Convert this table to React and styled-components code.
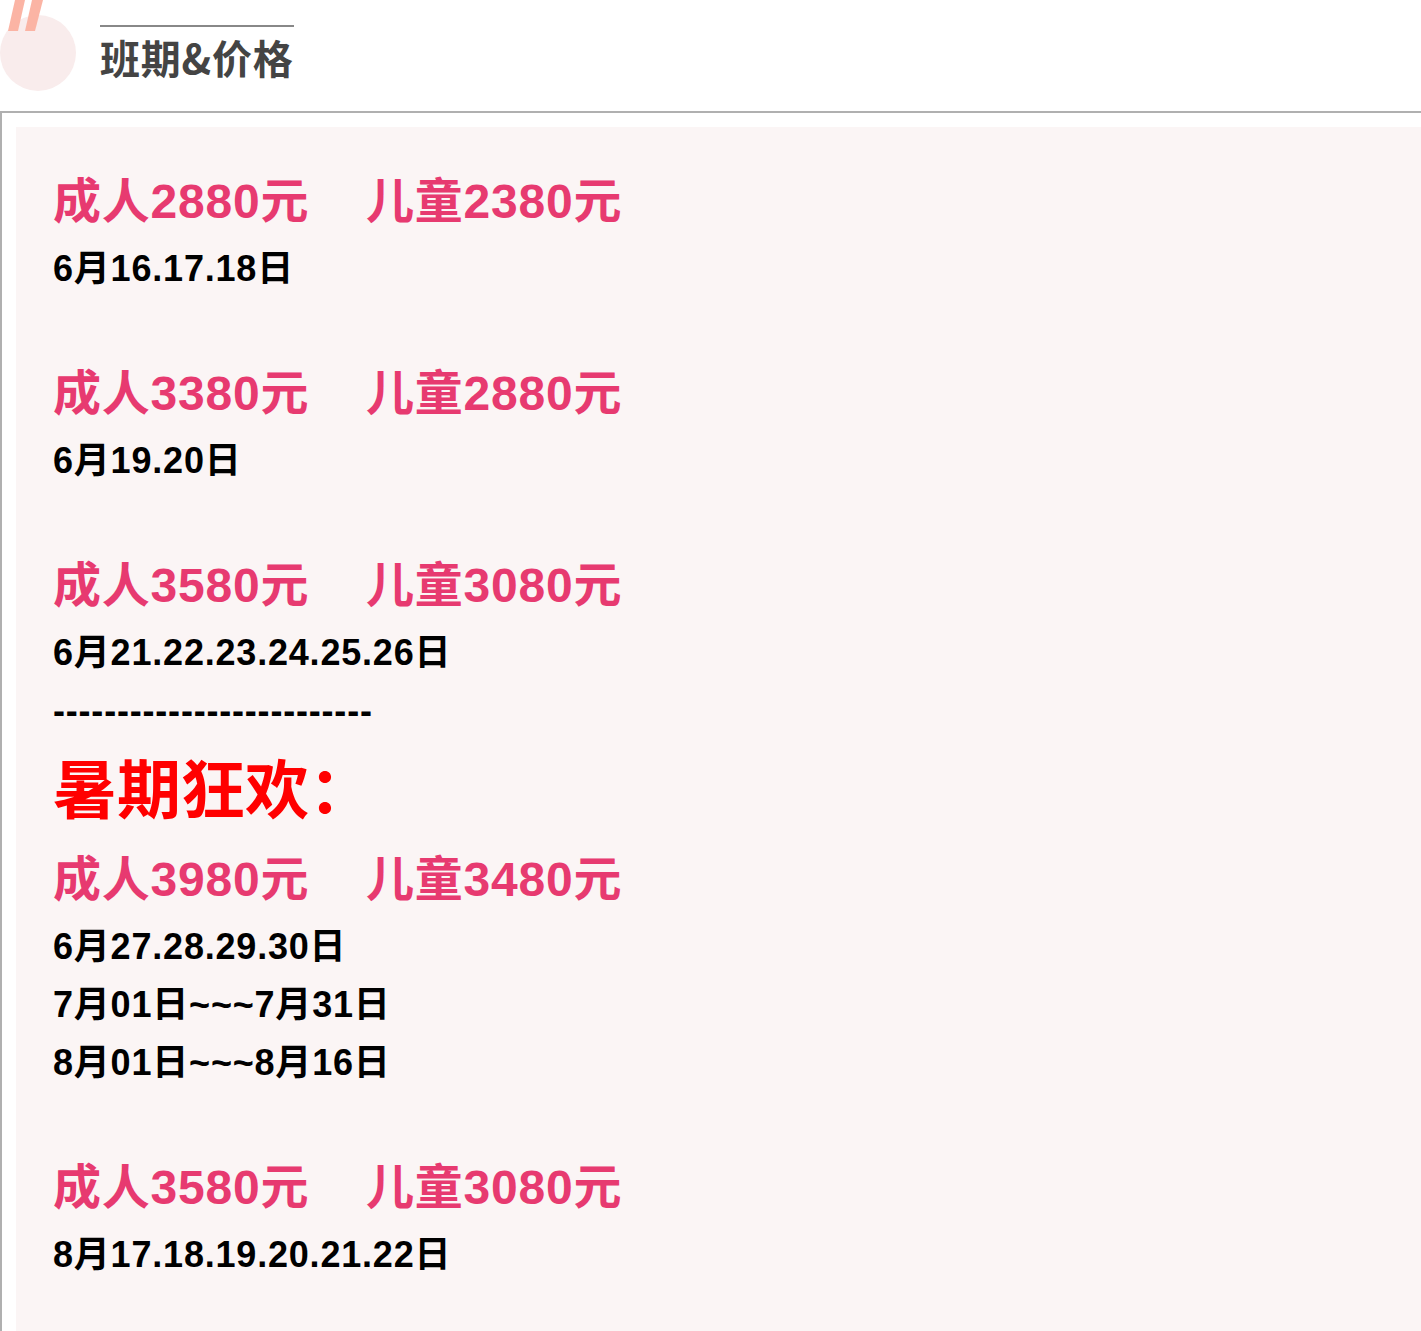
import React from "react";
import styled, { createGlobalStyle } from "styled-components";

const Global = createGlobalStyle`
  html, body { margin: 0; padding: 0; background: #ffffff; }
  body { overflow-x: hidden; font-family: "Liberation Sans", "Noto Sans CJK SC", sans-serif; }
`;

const Page = styled.div`
  width: 100%;
`;

const Header = styled.header`
  display: flex;
  align-items: flex-start;
  height: 111px;
`;

const Decor = styled.div`
  position: relative;
  width: 76px;
  height: 76px;
  margin-top: 15px;
  border-radius: 50%;
  background: #f9ecec;
  flex: none;
`;

const QuoteMark = styled.svg`
  position: absolute;
  left: 0;
  top: -15px;
  width: 46px;
  height: 31px;
`;

const Title = styled.h2`
  margin: 25px 0 0 24px;
  padding-top: 6px;
  border-top: 2px solid #888888;
  font-family: "Noto Sans CJK SC", "Liberation Sans", sans-serif;
  font-size: 40px;
  line-height: 48px;
  letter-spacing: 0.8px;
  font-weight: 700;
  color: #444444;
`;

const Frame = styled.section`
  border-top: 2px solid #b0b0b0;
  border-left: 2px solid #b0b0b0;
  padding: 14px 0 0 14px;
`;

const Panel = styled.div`
  background: #fbf5f5;
  padding: 37px 0 60px 37px;
  font-family: "Liberation Sans", "Noto Sans CJK SC", sans-serif;
  font-weight: 700;
`;

const PriceLine = styled.p`
  margin: 0;
  font-size: 48px;
  line-height: 76px;
  letter-spacing: 0.8px;
  color: #e73a70;
  white-space: pre;
`;

const DateLine = styled.p`
  margin: 0;
  font-size: 36px;
  line-height: 58px;
  letter-spacing: 0.8px;
  color: #000000;
  min-height: 58px;
  white-space: pre;
`;

const Promo = styled.p`
  margin: 0;
  font-size: 64px;
  line-height: 102px;
  color: #ff0000;
`;

const groups = [
  { adult: "成人2880元", child: "儿童2380元", dates: ["6月16.17.18日"], after: "blank" },
  { adult: "成人3380元", child: "儿童2880元", dates: ["6月19.20日"], after: "blank" },
  { adult: "成人3580元", child: "儿童3080元", dates: ["6月21.22.23.24.25.26日"], after: "divider" },
  { adult: "成人3980元", child: "儿童3480元", dates: ["6月27.28.29.30日", "7月01日~~~7月31日", "8月01日~~~8月16日"], after: "blank", promo: "暑期狂欢：" },
  { adult: "成人3580元", child: "儿童3080元", dates: ["8月17.18.19.20.21.22日"], after: null },
];

function Group({ g }) {
  return (
    <>
      {g.promo && <Promo>{g.promo}</Promo>}
      <PriceLine>{g.adult}{"\u00a0\u00a0\u00a0\u00a0"}{g.child}</PriceLine>
      {g.dates.map((d) => (
        <DateLine key={d}>{d}</DateLine>
      ))}
      {g.after === "blank" && <DateLine>{"\u00a0"}</DateLine>}
      {g.after === "divider" && <DateLine>{"-------------------------"}</DateLine>}
    </>
  );
}

export default function App() {
  return (
    <Page>
      <Global />
      <Header>
        <Decor>
          <QuoteMark viewBox="0 0 46 31">
            <polygon points="15,0 25,0 18,31 8,31" fill="#fbb4a4" />
            <polygon points="32,0 43,0 35,31 25,31" fill="#fbb4a4" />
          </QuoteMark>
        </Decor>
        <Title>班期&amp;价格</Title>
      </Header>
      <Frame>
        <Panel>
          {groups.map((g, i) => (
            <Group key={i} g={g} />
          ))}
        </Panel>
      </Frame>
    </Page>
  );
}
